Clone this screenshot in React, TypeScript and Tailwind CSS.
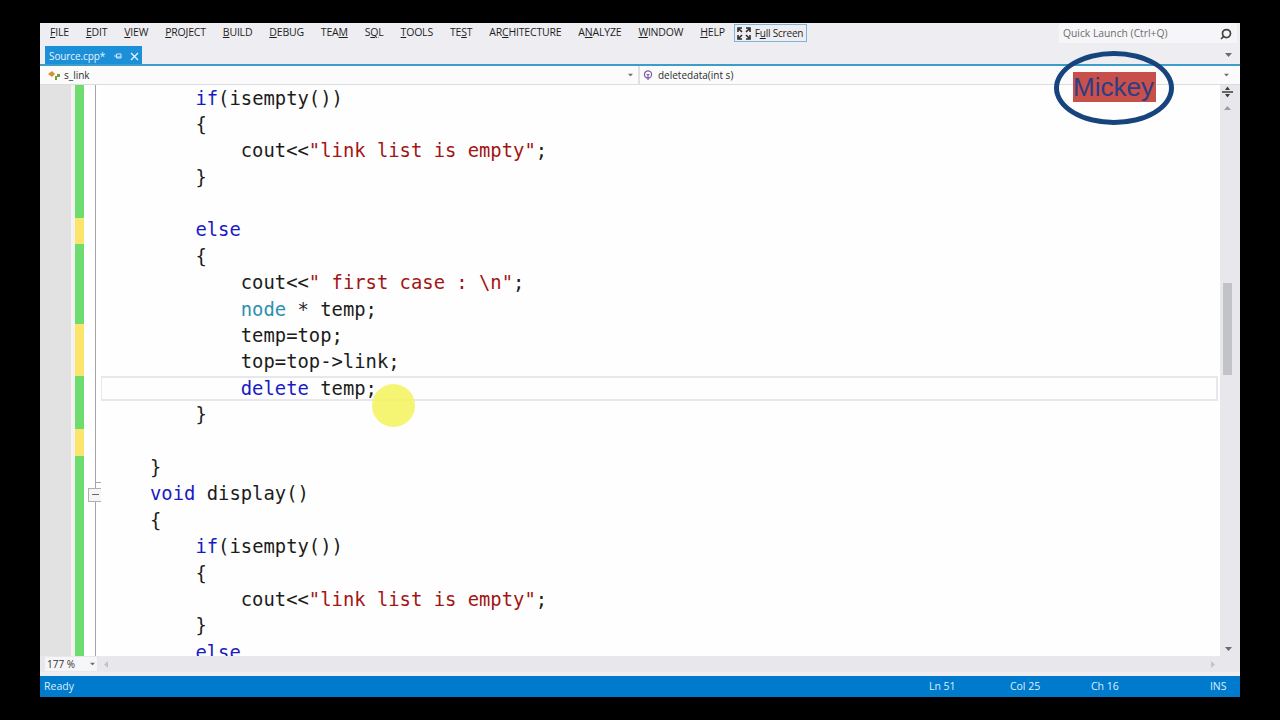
import React from 'react'
import { Search } from 'lucide-react'

const kw = 'text-[#1a1ac4]'
const str = 'text-[#a31515]'
const type = 'text-[#2b91af]'

type Seg = { t: string; c?: string }
type Line = { indent: number; segs: Seg[] }

const lines: Line[] = [
  { indent: 1, segs: [{ t: 'if', c: kw }, { t: '(isempty())' }] },
  { indent: 1, segs: [{ t: '{' }] },
  { indent: 2, segs: [{ t: 'cout<<' }, { t: '"link list is empty"', c: str }, { t: ';' }] },
  { indent: 1, segs: [{ t: '}' }] },
  { indent: 0, segs: [] },
  { indent: 1, segs: [{ t: 'else', c: kw }] },
  { indent: 1, segs: [{ t: '{' }] },
  { indent: 2, segs: [{ t: 'cout<<' }, { t: '" first case : \\n"', c: str }, { t: ';' }] },
  { indent: 2, segs: [{ t: 'node', c: type }, { t: ' * temp;' }] },
  { indent: 2, segs: [{ t: 'temp=top;' }] },
  { indent: 2, segs: [{ t: 'top=top->link;' }] },
  { indent: 2, segs: [{ t: 'delete', c: kw }, { t: ' temp;' }] },
  { indent: 1, segs: [{ t: '}' }] },
  { indent: 0, segs: [] },
  { indent: 0, segs: [{ t: '}' }] },
  { indent: 0, segs: [{ t: 'void', c: kw }, { t: ' display()' }] },
  { indent: 0, segs: [{ t: '{' }] },
  { indent: 1, segs: [{ t: 'if', c: kw }, { t: '(isempty())' }] },
  { indent: 1, segs: [{ t: '{' }] },
  { indent: 2, segs: [{ t: 'cout<<' }, { t: '"link list is empty"', c: str }, { t: ';' }] },
  { indent: 1, segs: [{ t: '}' }] },
  { indent: 1, segs: [{ t: 'else', c: kw }] },
]

const menus: [string, string, string][] = [
  ['', 'F', 'ILE'],
  ['', 'E', 'DIT'],
  ['', 'V', 'IEW'],
  ['', 'P', 'ROJECT'],
  ['', 'B', 'UILD'],
  ['', 'D', 'EBUG'],
  ['TEA', 'M', ''],
  ['S', 'Q', 'L'],
  ['', 'T', 'OOLS'],
  ['TE', 'S', 'T'],
  ['AR', 'C', 'HITECTURE'],
  ['A', 'N', 'ALYZE'],
  ['', 'W', 'INDOW'],
  ['', 'H', 'ELP'],
]

// change margin colours, top to bottom
const changeBars = [
  { h: 133, c: 'bg-[#6fdc6f]' },
  { h: 26, c: 'bg-[#fbe56b]' },
  { h: 80, c: 'bg-[#6fdc6f]' },
  { h: 52, c: 'bg-[#fbe56b]' },
  { h: 53, c: 'bg-[#6fdc6f]' },
  { h: 27, c: 'bg-[#fbe56b]' },
  { h: 200, c: 'bg-[#6fdc6f]' },
]

const Caret = ({ className = '' }: { className?: string }) => (
  <svg width="7" height="4" viewBox="0 0 7 4" className={className}>
    <path d="M0 0h7L3.5 4z" fill="#6b6b70" />
  </svg>
)

export default function App() {
  return (
    <div className="w-[1280px] h-[720px] bg-black pt-[23px] px-10 overflow-hidden font-['Open_Sans',sans-serif]">
      <div className="relative w-[1200px] h-[674px] bg-[#eeeef2] flex flex-col overflow-hidden">
        {/* menu bar */}
        <div className="h-[20px] flex items-center text-[#1e1e1e] text-[10.5px] shrink-0">
          <div className="flex items-center pl-[10px] gap-[17px] tracking-[-0.2px] whitespace-nowrap">
            {menus.map(([a, b, c]) => (
              <span key={a + b + c}>
                {a}
                <span className="underline">{b}</span>
                {c}
              </span>
            ))}
          </div>
          <div className="ml-[9px] h-[18px] w-[73px] shrink-0 border border-[#7fb4d8] flex items-center pl-[2px] gap-[4px] text-[10px] tracking-[-0.2px] whitespace-nowrap">
            <svg width="14" height="13" viewBox="0 0 14 13" fill="none" stroke="#2d2d30" strokeWidth="1.6" className="shrink-0">
              <path d="M1 5V1h4M13 5V1H9M1 8v4h4M13 8v4H9M2 2l3 3M12 2L9 5M2 11l3-3M12 11L9 8" />
            </svg>
            <span>
              F<span className="underline">u</span>ll Screen
            </span>
          </div>
          <div className="ml-auto mr-[3px] w-[178px] h-[20px] bg-[#f6f6f8] flex items-center justify-between pl-[4px] pr-[5px] pt-[1px] text-[10.3px] text-[#6d6d6d] whitespace-nowrap">
            <span>Quick Launch (Ctrl+Q)</span>
            <Search size={12} strokeWidth={3.5} className="text-[#444] -scale-x-100" />
          </div>
        </div>

        {/* tab row */}
        <div className="h-[21px] flex items-end shrink-0">
          <div className="ml-[5px] w-[97px] h-[18px] bg-[#1b8fd8] text-[#e8f3fb] text-[10px] flex items-center pl-[4px] pt-[2px] tracking-[-0.1px]">
            <span>Source.cpp*</span>
            <svg width="8" height="8" viewBox="0 0 8 8" className="ml-[9px]" fill="none" stroke="#d5e8f5">
              <path d="M0 4h2M2.5 2v4h4.5V2zM2.5 5h4.5" />
            </svg>
            <svg width="9" height="9" viewBox="0 0 9 9" className="ml-[8px]" fill="none" stroke="#e8f3fb" strokeWidth="1.3">
              <path d="M1 1l7 7M8 1L1 8" />
            </svg>
          </div>
          <div className="flex-1 h-[18px] flex items-center justify-end pr-[8px]">
            <Caret />
          </div>
        </div>
        <div className="h-[1.5px] bg-[#3c9dca] shrink-0" />

        {/* navigation bar */}
        <div className="h-[19px] flex items-center bg-[#fbfbfc] border-b border-[#dcdce0] text-[10px] text-[#2d2d30] shrink-0">
          <div className="w-[600px] h-full flex items-center border-r-2 border-[#e0e0e4] relative pl-[8px] pt-[1px] gap-[2px]">
            <svg width="14" height="11" viewBox="0 0 14 11">
              <path d="M0 4l4-3 3 3-3 3z" fill="#d9902f" />
              <path d="M7 6h2V4h3v3H9v3H7z" fill="#7a9a3c" />
            </svg>
            <span>s_link</span>
            <Caret className="absolute right-[4px] top-[7px] scale-75" />
          </div>
          <div className="flex-1 flex items-center pl-[3px] pt-[1px] gap-[5px] relative h-full">
            <svg width="10" height="11" viewBox="0 0 10 11" fill="none" stroke="#7d5ba6" strokeWidth="1.2">
              <circle cx="5" cy="4.5" r="3.6" />
              <path d="M5 4v6M3.5 4.5h3" />
            </svg>
            <span>deletedata(int s)</span>
            <Caret className="absolute right-[10px] top-[7px] scale-75" />
          </div>
        </div>

        {/* editor */}
        <div className="flex-1 flex min-h-0">
          <div className="w-[31px] bg-[#e2e2e3] shrink-0" />
          <div className="w-[4px] bg-[#f3f3f4] shrink-0" />
          <div className="w-[9px] shrink-0 flex flex-col overflow-hidden">
            {changeBars.map((b, i) => (
              <div key={i} className={`${b.c} shrink-0`} style={{ height: b.h }} />
            ))}
          </div>
          <div className="w-[11px] bg-white shrink-0" />
          <div className="relative w-[6px] shrink-0 bg-white border-l border-[#a5a5a5]">
            <div className="absolute left-[-8px] top-[403px] w-[14px] h-[14px] border-[1.5px] border-[#b0b0b0] bg-[#f5f5f5] flex items-center justify-center">
              <div className="w-[7px] h-px bg-[#666]" />
            </div>
            <div className="absolute left-0 top-[397px] w-[5px] h-px bg-[#a5a5a5]" />
          </div>
          <div className="relative flex-1 bg-[#fdfefd] overflow-hidden font-['DejaVu_Sans_Mono',monospace] text-[18.85px] text-[#1c1c1c]">
            <div className="mt-[1px]">
              {lines.map((l, i) => (
                <div
                  key={i}
                  className={`h-[26.4px] leading-[26.4px] whitespace-pre pl-[49px] ${
                    i === 11 ? 'relative' : ''
                  }`}
                >
                  {i === 11 && (
                    <div className="absolute left-[-1px] top-0 w-[1118px] h-[25px] border-2 border-[#e8e8ec] pointer-events-none" />
                  )}
                  <span className="relative">
                    {'    '.repeat(l.indent)}
                    {l.segs.map((s, j) => (
                      <span key={j} className={s.c}>
                        {s.t}
                      </span>
                    ))}
                  </span>
                </div>
              ))}
            </div>
          </div>

          {/* vertical scrollbar */}
          <div className="w-[20px] shrink-0 bg-[#e8e8ec] flex flex-col items-center relative pr-[5px]">
            <div className="h-[15px] w-full flex items-center justify-center">
              <svg width="11" height="12" viewBox="0 0 11 12" fill="#3a3a3a">
                <path d="M0 5.3h11v1.4H0zM3 4l2.5-3.5L8 4zM3 8l2.5 3.5L8 8z" />
              </svg>
            </div>
            <Caret className="mt-[6px] rotate-180 opacity-60" />
            <div className="absolute top-[198px] left-[3px] w-[9px] h-[92px] bg-[#c2c3c9]" />
            <Caret className="absolute bottom-[5px] left-[5px]" />
          </div>
        </div>

        {/* horizontal scroll row */}
        <div className="h-[16px] flex items-center bg-[#e8e8ec] shrink-0">
          <div className="w-[52px] h-[14px] bg-[#f6f6f8] ml-[5px] flex items-center justify-between pl-[2px] pr-[1px] text-[10px] text-[#333]">
            <span>177 %</span>
            <Caret className="scale-75" />
          </div>
          <svg width="4" height="7" viewBox="0 0 4 7" className="ml-[7px]">
            <path d="M4 0v7L0 3.5z" fill="#c4c4c8" />
          </svg>
          <svg width="4" height="7" viewBox="0 0 4 7" className="ml-auto mr-[25px]">
            <path d="M0 0v7l4-3.5z" fill="#c4c4c8" />
          </svg>
        </div>
        <div className="h-[4px] bg-[#eeeef2] shrink-0" />

        {/* status bar */}
        <div className="h-[21px] bg-[#007acc] text-[#dff0fb] text-[10.5px] flex items-center pl-[4px] shrink-0">
          <span>Ready</span>
          <span className="ml-[855px] w-[81px]">Ln 51</span>
          <span className="w-[81px]">Col 25</span>
          <span className="w-[119px]">Ch 16</span>
          <span>INS</span>
        </div>

        {/* recording overlays */}
        <div className="absolute left-[1014px] top-[28px] w-[120px] h-[74px] rounded-[50%] border-[5px] border-[#17447c]" />
        <div className="absolute left-[1033px] top-[49px] w-[83px] h-[30px] bg-[#c8504a] text-[#2d3d86] text-[26px] leading-[30px] font-['Liberation_Sans',sans-serif] overflow-hidden">
          Mickey
        </div>
        <div className="absolute left-[332px] top-[361px] w-[43px] h-[43px] rounded-full bg-[#f4f25a]/85" />
      </div>
    </div>
  )
}
